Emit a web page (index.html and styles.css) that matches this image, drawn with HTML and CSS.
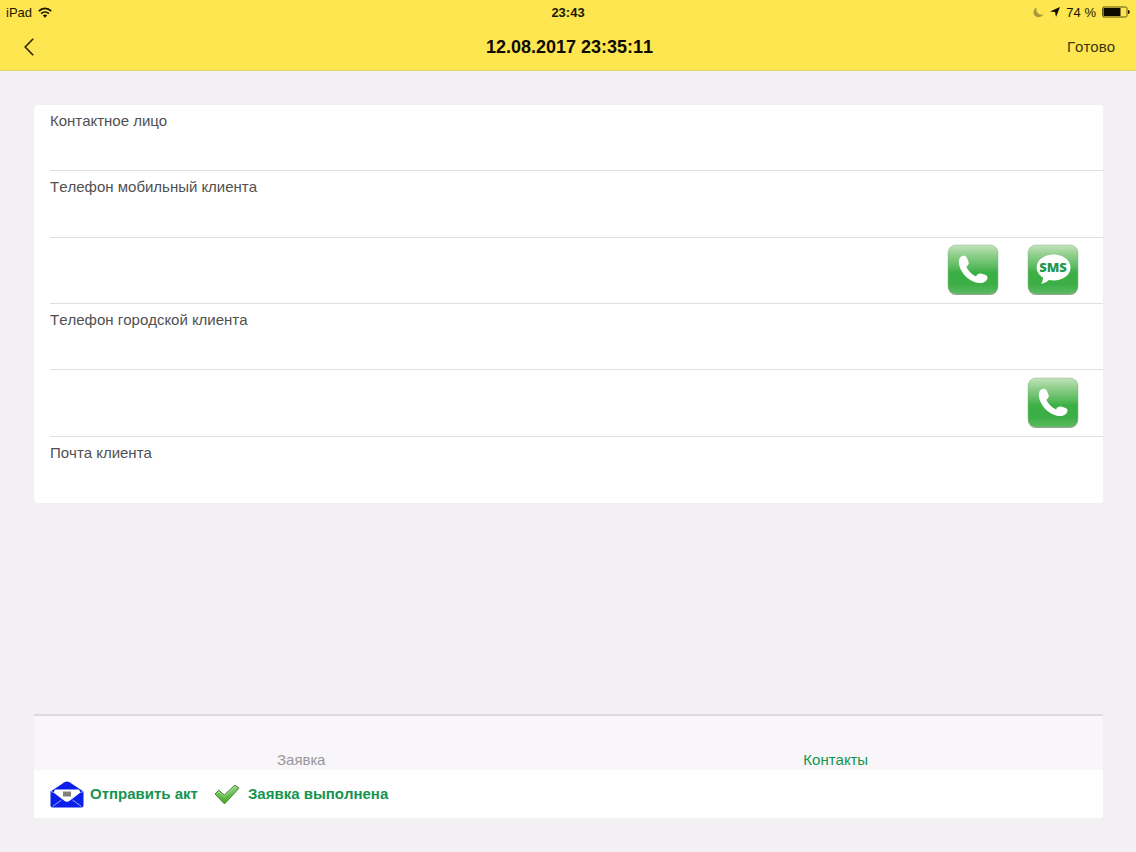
FILE: index.html
```html
<!DOCTYPE html>
<html lang="ru">
<head>
    <meta charset="UTF-8">
    <meta name="viewport" content="width=device-width, initial-scale=1.0">
    <title>Контакты</title>
    <link rel="stylesheet" href="styles.css">
</head>
<body>

    <!-- gradients and shapes shared by the icons -->
    <svg class="defs" width="0" height="0" aria-hidden="true">
        <defs>
            <linearGradient id="green" x1="0" y1="0" x2="0" y2="1">
                <stop offset="0" stop-color="#c3e4bd"/>
                <stop offset="0.22" stop-color="#8ccd88"/>
                <stop offset="0.46" stop-color="#58b95c"/>
                <stop offset="0.56" stop-color="#3bb044"/>
                <stop offset="0.8" stop-color="#3cae46"/>
                <stop offset="1" stop-color="#5cba60"/>
            </linearGradient>
            <linearGradient id="tick" x1="0" y1="0" x2="0" y2="1">
                <stop offset="0" stop-color="#94d486"/>
                <stop offset="1" stop-color="#42a81f"/>
            </linearGradient>
            <symbol id="tile" viewBox="0 0 52 52">
                <rect x="1" y="2" width="50" height="49" rx="8" fill="#95a294"/>
                <rect x="1" y="1" width="50" height="49" rx="8" fill="url(#green)" stroke="#8fb58c" stroke-opacity="0.5"/>
            </symbol>
            <symbol id="phone" viewBox="0 0 52 52">
                <use href="#tile"/>
                <path d="M14 12.6C16 11.2 19 11.6 19.8 13.6L21.6 18C22.2 20 21.2 21.4 19.4 22.6C20.6 26.4 25 30.8 29 32.4C30 30.4 31.8 29 34 29.5L38.6 30.9C41 31.8 40.9 34.5 39.5 36.2C36.6 39.7 31.2 39.6 26.8 37.7C20 34.8 14 28.5 12.3 21.5C11.5 18 11.7 14.4 14 12.6Z" fill="#fff"/>
            </symbol>
        </defs>
    </svg>

    <header>
        <div class="status">
            <div class="status-left">
                <span>iPad</span>
                <svg width="14" height="11" viewBox="0 0 14 11" fill="none" stroke="#1c1800" stroke-width="1.7" aria-hidden="true">
                    <path d="M0.8 4.2C4.3 0.4 9.7 0.4 13.2 4.2"/>
                    <path d="M3.1 6.7C5.3 4.4 8.7 4.4 10.9 6.7"/>
                    <path d="M7 10.8L4.8 8.4C6 7.2 8 7.2 9.2 8.4Z" fill="#1c1800" stroke="none"/>
                </svg>
            </div>
            <span class="time">23:43</span>
            <div class="status-right">
                <svg width="11" height="11" viewBox="0 0 11 11" aria-hidden="true">
                    <path d="M3.6 0.5C2.6 5 5.6 8.4 10.5 7.5C7.6 11.6 0.7 11 0.5 5.6C0.5 3.2 1.7 1.3 3.6 0.5Z" fill="#a89a3c"/>
                </svg>
                <svg width="10" height="10" viewBox="0 0 10 10" aria-hidden="true">
                    <path d="M10 0L6 10L5 5L0 4.6Z" fill="#0d0b00"/>
                </svg>
                <span>74 %</span>
                <svg width="28" height="12" viewBox="0 0 28 12" aria-hidden="true">
                    <rect x="0.5" y="1" width="24.5" height="10" rx="1.5" fill="none" stroke="#5b5218"/>
                    <rect x="1.5" y="2" width="17" height="8" fill="#0d0b00"/>
                    <path d="M26 4C28.4 4.4 28.4 7.6 26 8Z" fill="#1c1800"/>
                </svg>
            </div>
        </div>
        <div class="nav">
            <button class="back" type="button" aria-label="Назад">
                <svg width="10" height="18" viewBox="0 0 10 18" fill="none" stroke="#2e2800" stroke-width="1.6">
                    <path d="M9.2 0.8L1.2 9L9.2 17.2"/>
                </svg>
            </button>
            <h1>12.08.2017 23:35:11</h1>
            <button class="done" type="button">Готово</button>
        </div>
    </header>

    <main>
        <form class="card">
            <div class="row">
                <label for="person">Контактное лицо</label>
                <input id="person" type="text">
            </div>
            <div class="row">
                <label for="mobile">Телефон мобильный клиента</label>
                <input id="mobile" type="tel">
            </div>
            <div class="row actions">
                <button type="button" aria-label="Позвонить на мобильный">
                    <svg width="52" height="52"><use href="#phone"/></svg>
                </button>
                <button type="button" aria-label="Отправить сообщение">
                    <svg width="52" height="52" viewBox="0 0 52 52">
                        <use href="#tile"/>
                        <path d="M26.5 10.5C36 10.5 43.5 16 43.5 23.5C43.5 31 36 36.5 26.5 36.5C24.8 36.5 23.2 36.3 21.7 36C19.8 38 17.2 39.5 14 39.8C15.5 38 16.2 36 16 33.6C12.2 31.2 9.7 27.6 9.7 23.5C9.7 16 17 10.5 26.5 10.5Z" fill="#fff"/>
                        <text class="sms" x="26" y="28" text-anchor="middle">SMS</text>
                    </svg>
                </button>
            </div>
            <div class="row">
                <label for="landline">Телефон городской клиента</label>
                <input id="landline" type="tel">
            </div>
            <div class="row actions">
                <button type="button" aria-label="Позвонить на городской">
                    <svg width="52" height="52"><use href="#phone"/></svg>
                </button>
            </div>
            <div class="row">
                <label for="mail">Почта клиента</label>
                <input id="mail" type="email">
            </div>
        </form>

        <div class="bottom">
            <nav class="tabs">
                <a href="#order">Заявка</a>
                <a href="#contacts" class="active">Контакты</a>
            </nav>
            <div class="toolbar">
                <button type="button">
                    <svg width="34" height="28" viewBox="0 0 34 28" aria-hidden="true">
                        <path d="M0.5 11.5L14.5 2.2Q17 1 19.5 2.2L33.5 11.5V25.5Q33.5 27.5 31.5 27.5H2.5Q0.5 27.5 0.5 25.5Z" fill="#0b1fe8"/>
                        <path d="M5 9.5H29L30.5 12.5L20 20.5Q17 23 14 20.5L3.5 12.5Z" fill="#fff"/>
                        <path d="M1 11.5L3.5 12.5M33 11.5L30.5 12.5M2.5 26.5L11.5 20M31.5 26.5L22.5 20" stroke="#9aa8ff" fill="none"/>
                        <rect x="13" y="11.5" width="8" height="5" fill="#80817d"/>
                    </svg>
                    <span>Отправить акт</span>
                </button>
                <button type="button">
                    <svg class="check" width="26" height="22" viewBox="0 0 26 22" aria-hidden="true">
                        <path d="M1 11L4.8 7.2L10.3 12L21 2L25 5.2L10.5 21Z" fill="url(#tick)" stroke="#4b8440" stroke-linejoin="round"/>
                        <path d="M3 11L4.8 8.9L10.3 13.6L21 3.7" fill="none" stroke="#c5eab9" stroke-opacity="0.6"/>
                    </svg>
                    <span>Заявка выполнена</span>
                </button>
            </div>
        </div>
    </main>

</body>
</html>
```
FILE: styles.css
```css
* {
    box-sizing: border-box;
}

body {
    font-family: "Liberation Sans", Arial, sans-serif;
    font-size: 15px;
    font-kerning: none;
    margin: 0;
    min-height: 100vh;
    display: flex;
    flex-direction: column;
    background-color: #f2f0f3;
    color: #505052;
}

button {
    font: inherit;
    font-kerning: inherit;
    color: inherit;
    background: none;
    border: none;
    padding: 0;
    cursor: pointer;
}

svg {
    display: block;
}

.defs {
    position: absolute;
}

header {
    background-color: #fde650;
    border-bottom: 1px solid #e2d267;
    color: #1c1800;
}

.status,
.nav {
    display: grid;
    grid-template-columns: 1fr auto 1fr;
    align-items: center;
}

.status {
    height: 24px;
    padding: 0 6px;
    font-size: 13px;
}

.status-left,
.status-right {
    display: flex;
    align-items: center;
    gap: 6px;
}

.status-right {
    justify-content: flex-end;
}

.time {
    font-weight: bold;
}

.nav {
    height: 46px;
    padding: 0 21px 0 24px;
}

.nav h1 {
    margin: 0;
    font-size: 18px;
    color: #0d0b00;
}

.back {
    justify-self: start;
}

.done {
    justify-self: end;
    line-height: 20px;
    color: #3c3510;
}

main {
    flex: 1;
    display: flex;
    flex-direction: column;
    justify-content: space-between;
    padding: 34px 33px 34px 34px;
}

.card {
    display: grid;
    grid-auto-rows: 1fr;
    min-height: 398px;
    padding-left: 16px;
    background-color: #ffffff;
    border-radius: 4px;
}

.row {
    display: flex;
    flex-direction: column;
    padding-top: 7px;
    border-bottom: 1px solid #dfdfe1;
}

.row:last-child {
    border-bottom: none;
}

.row label {
    line-height: 18px;
}

.row input {
    flex: 1;
    min-height: 0;
    padding: 0;
    border: none;
    outline: none;
    background: none;
    font: inherit;
    color: inherit;
}

.actions {
    flex-direction: row;
    justify-content: flex-end;
    align-items: center;
    gap: 28px;
    padding: 0 24px 0 0;
}

.sms {
    font-family: "Open Sans", sans-serif;
    font-size: 13px;
    font-weight: 800;
    fill: #24964f;
}

.tabs {
    display: grid;
    grid-template-columns: 1fr 1fr;
    align-items: end;
    height: 56px;
    border-top: 2px solid #dddbdf;
    background-color: #f8f6f9;
}

.tabs a {
    text-align: center;
    text-decoration: none;
    line-height: 20px;
    color: #98989b;
}

.tabs .active {
    color: #15944f;
}

.toolbar {
    display: flex;
    align-items: center;
    gap: 16px;
    height: 48px;
    padding: 0 16px;
    background-color: #ffffff;
}

.toolbar button {
    display: flex;
    align-items: center;
    gap: 6px;
    font-weight: bold;
    color: #15944f;
}

.toolbar span {
    padding-bottom: 2px;
}

.check {
    margin-right: 2px;
}
```
